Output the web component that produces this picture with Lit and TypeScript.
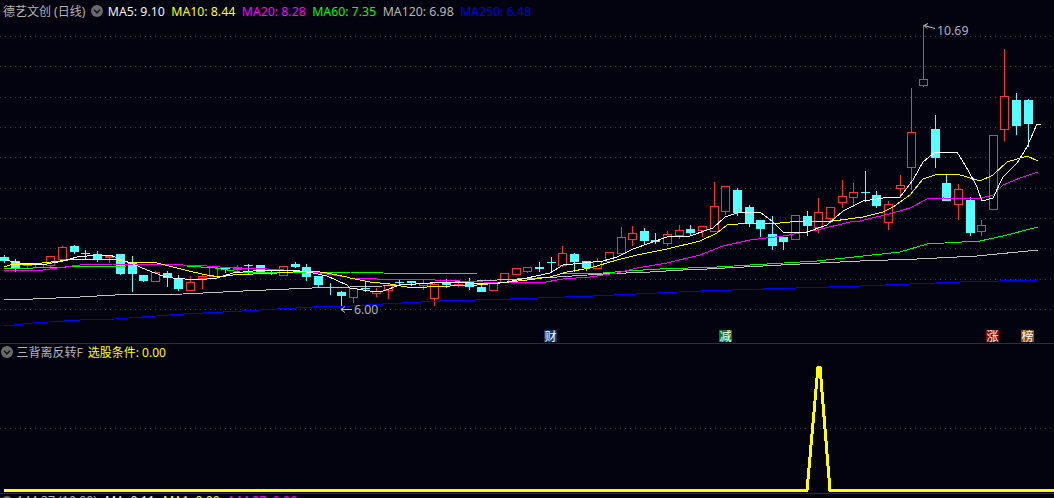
import { LitElement, html, css, svg } from "lit";
import { customElement } from "lit/decorators.js";

type C = [number, "r" | "c", number, number, number, number];
// index, kind, high, body top, body bottom, low
const CANDLES: C[] = [
  [0,"c",255,257,261,263],[1,"c",259,261,269,272],[2,"r",263,264,265,269],[3,"r",263,264,267,268],
  [4,"r",256,256,265,269],[5,"r",246,247,259,259],[6,"c",245,246,252,254],[7,"c",250,253,254,259],
  [8,"c",251,254,259,262],[9,"r",256,256,257,263],[10,"c",254,254,274,275],[11,"c",256,263,274,292],
  [12,"c",275,275,281,282],[13,"r",271,272,281,282],[14,"c",271,273,278,287],[15,"c",275,278,289,291],
  [16,"r",276,282,290,290],[17,"r",275,276,278,289],[18,"r",267,267,276,277],[19,"c",267,267,269,273],
  [20,"r",265,267,269,272],[21,"c",264,265,266,275],[22,"c",265,265,272,272],[23,"c",271,273,274,275],
  [24,"r",266,266,275,276],[25,"c",262,264,267,268],[26,"c",264,267,277,281],[27,"c",276,276,285,288],
  [28,"c",283,287,288,295],[29,"c",291,292,296,306],[30,"r",288,288,297,303],[31,"c",282,288,289,292],
  [32,"r",288,291,293,297],[33,"r",283,285,290,299],[34,"c",280,282,283,285],[35,"c",281,281,283,286],
  [36,"r",280,283,285,290],[37,"r",282,284,298,306],[38,"c",279,282,285,288],[39,"r",282,284,285,287],
  [40,"c",278,282,287,290],[41,"c",284,287,292,292],[42,"r",282,282,290,290],[43,"r",273,273,282,283],
  [44,"r",268,268,274,275],[45,"r",267,267,271,273],[46,"c",262,267,269,272],[47,"c",257,262,263,272],
  [48,"r",246,253,265,267],[49,"c",253,254,262,272],[50,"c",261,261,268,271],[51,"r",258,261,268,269],
  [52,"r",252,252,261,262],[53,"r",227,237,253,253],[54,"r",226,233,239,246],[55,"c",228,231,241,244],
  [56,"c",233,240,242,244],[57,"r",231,234,243,246],[58,"r",225,230,235,239],[59,"c",225,229,233,236],
  [60,"r",226,226,230,237],[61,"r",182,206,231,231],[62,"r",186,186,211,215],[63,"c",188,190,213,216],
  [64,"c",205,207,224,227],[65,"c",220,220,229,237],[66,"c",216,234,246,250],[67,"c",237,237,242,250],
  [68,"r",215,215,239,239],[69,"c",211,216,226,236],[70,"r",198,212,227,233],[71,"r",207,207,218,223],
  [72,"r",180,196,202,208],[73,"r",183,192,197,207],[74,"c",171,192,193,202],[75,"c",191,195,206,208],
  [76,"r",201,204,222,230],[77,"r",175,185,188,198],[78,"r",88,132,167,190],[79,"r",25,79,85,87],
  [80,"c",115,129,158,168],[81,"c",174,183,201,201],[82,"r",184,189,204,220],[83,"c",197,200,233,236],
  [84,"r",220,225,231,236],[85,"r",135,135,209,209],[86,"r",49,96,129,141],[87,"c",93,100,126,135],
  [88,"c",99,100,124,147],
];

const MA5 = "0,259 20,263 33,264 47,264 63,261 77,257 97,255 110,255 120,259 133,264 147,270 163,276 173,278 197,280 217,278 233,273 253,271 273,270 293,270 313,273 327,276 347,285 350,288 370,291 383,291 400,285 430,283 450,282 470,283 490,284 507,282 527,278 550,273 563,265 583,263 603,261 617,257 633,249 650,243 667,237 690,236 713,228 725,217 740,212 760,212 773,222 783,232 807,232 827,225 843,211 863,201 883,198 900,197 913,180 923,162 935,152 957,152 968,170 977,187 982,201 993,198 1003,177 1017,163 1027,147 1037,124 1041,124";
const MA10 = "4,267 10,265 33,264 60,261 77,259 113,259 127,262 157,263 177,268 193,272 207,275 220,277 233,275 253,274 277,273 293,272 313,271 327,273 347,277 350,278 360,280 370,282 390,284 407,287 427,287 450,286 477,285 500,283 527,280 550,277 567,272 590,268 617,260 637,255 667,249 700,241 717,233 727,225 750,223 780,223 800,221 833,221 863,217 883,212 893,207 910,195 923,179 935,175 957,174 980,181 993,175 1007,162 1027,156 1038,161";
const MA20 = "4,271 20,270 43,270 57,268 80,265 113,264 167,264 183,265 207,266 233,268 267,269 300,271 320,273 347,277 350,278 377,279 410,279 460,281 483,282 540,283 563,279 590,277 617,273 637,268 667,263 700,255 723,246 750,240 783,236 817,230 850,222 860,221 893,213 910,208 927,199 943,198 977,199 993,195 1003,185 1020,178 1038,172";
const MA60 = "4,269 33,268 67,267 127,266 187,266 215,268 240,272 350,272 383,273 477,274 563,274 603,273 627,271 660,269 717,267 767,264 817,261 900,252 927,244 980,241 1003,236 1038,227";
const MA120 = "4,300 33,299 80,297 115,295 183,294 243,291 312,288 350,287 383,286 433,283 477,281 557,277 603,274 650,272 683,270 707,269 800,264 860,261 917,259 977,256 1038,250";
const MA250 = "4,326 33,323 80,320 115,319 183,314 243,311 312,307 350,306 383,304 440,301 510,299 593,296 700,291 860,286 960,282 1038,280";

const GRID = [36, 66, 97, 127, 157, 188, 218, 248, 279, 309];

const chevron = html`<svg class="chev" viewBox="0 0 12 12" aria-hidden="true">
  <circle cx="6" cy="6" r="6" fill="#6a6a6a"></circle>
  <path d="M3 4.8 6 7.8 9 4.8" fill="none" stroke="#16161c" stroke-width="1.6"></path>
</svg>`;

@customElement("app-root")
export class AppRoot extends LitElement {
  static styles = css`
    :host {
      display: block;
      width: 100%;
      height: 498px;
      overflow: hidden;
      background: #03030f;
      font-family: "Noto Sans", "Noto Sans CJK SC", sans-serif;
      font-size: 12.3px;
      color: #b4b4b4;
    }
    .main, .sub {
      display: grid;
      width: 1054px;
    }
    .main { height: 343px; border-bottom: 1px solid #303034; }
    .sub { height: 149px; border-bottom: 1px solid #303034; }
    .layer { grid-area: 1 / 1; }
    svg.plot { display: block; width: 1054px; height: 100%; }
    .legend {
      display: flex;
      align-items: center;
      height: 22px;
      padding-left: 3px;
      white-space: nowrap;
      align-self: start;
    }
    .sub .legend { padding-left: 1px; height: 16px; font-size: 12px; }
    .chev { width: 12px; height: 12px; flex: none; }
    .name { margin-right: 6px; font-size: 12px; }
    .ma { margin-left: 6.5px; }
    .ma.first { margin-left: 4.5px; }
    .white { color: #f0f0f0; }
    .yellow { color: #ffff00; }
    .magenta { color: #ff00ff; }
    .green { color: #00ff00; }
    .grey { color: #b8b8b8; }
    .blue { color: #0000e8; }
    .cond { color: #ffff00; margin-left: 5px; }
    .title { margin-left: 3.5px; }
    .footer {
      display: flex;
      align-items: flex-start;
      height: 4px;
      overflow: hidden;
      padding: 2px 0 0 1px;
      width: 1054px;
      font-size: 12.3px;
      line-height: 10px;
      white-space: nowrap;
      box-sizing: border-box;
    }
    .footer .ma { margin-left: 8px; }
    text.val { font-family: "Noto Sans", sans-serif; font-size: 12.3px; fill: #aab4c0; }
    text.badge-t { font-family: "Noto Sans CJK SC", sans-serif; font-size: 12px; fill: #ffffff; text-anchor: middle; }
  `;

  private candle(c: C) {
    const [i, kind, hi, top, bot, lo] = c;
    const x = Math.floor(4.3 + i * 11.636);
    const col = kind === "r" ? "#ff3232" : "#54ffff";
    const wick = svg`<line x1=${x + 0.5} x2=${x + 0.5} y1=${hi} y2=${top} stroke=${col}></line>
      <line x1=${x + 0.5} x2=${x + 0.5} y1=${bot} y2=${lo} stroke=${col}></line>`;
    const body =
      kind === "r"
        ? svg`<rect x=${x - 3.5} y=${top + 0.5} width="8" height=${Math.max(bot - top, 1)} fill="#03030f" stroke=${col}></rect>`
        : svg`<rect x=${x - 4} y=${top} width="9" height=${Math.max(bot - top, 1)} fill=${col}></rect>`;
    return svg`${wick}${body}`;
  }

  private badge(x: number, fill: string, t: string) {
    return svg`<rect x=${x} y="330" width="13" height="12" fill=${fill}></rect>
      <text class="badge-t" x=${x + 6.5} y="340.5">${t}</text>`;
  }

  render() {
    return html`
      <div class="main">
        <svg class="plot layer" viewBox="0 0 1054 343">
          ${GRID.map(
            (y) => svg`<line x1="0" x2="1054" y1=${y + 0.5} y2=${y + 0.5} stroke="#3c3c3c" stroke-dasharray="1 4"></line>`
          )}
          <g shape-rendering="crispEdges">${CANDLES.map((c) => this.candle(c))}</g>
          <g fill="none" stroke-width="1" shape-rendering="crispEdges">
            <polyline points=${MA250} stroke="#0000ff"></polyline>
            <polyline points=${MA120} stroke="#c0c0c0"></polyline>
            <polyline points=${MA60} stroke="#00ff00"></polyline>
            <polyline points=${MA20} stroke="#ff00ff"></polyline>
            <polyline points=${MA10} stroke="#ffff00"></polyline>
            <polyline points=${MA5} stroke="#ffffff"></polyline>
          </g>
          <g fill="none" stroke="#c8c8c8">
            <path d="M924 25.5 935 28.5M924 25.5 928 23.5M924 25.5 927 28.5"></path>
            <path d="M341 309.5H352M341 309.5 345 306.5M341 309.5 345 312.5"></path>
          </g>
          <text class="val" x="937" y="35">10.69</text>
          <text class="val" x="354" y="314">6.00</text>
          ${this.badge(544, "#0a3a70", "财")}
          ${this.badge(719, "#0a7a14", "减")}
          ${this.badge(986, "#780a10", "涨")}
          ${this.badge(1021, "#8a4a10", "榜")}
        </svg>
        <div class="legend layer">
          <span class="name">德艺文创 (日线)</span>
          ${chevron}
          <span class="ma first white">MA5: 9.10</span>
          <span class="ma yellow">MA10: 8.44</span>
          <span class="ma magenta">MA20: 8.28</span>
          <span class="ma green">MA60: 7.35</span>
          <span class="ma grey">MA120: 6.98</span>
          <span class="ma blue">MA250: 6.48</span>
        </div>
      </div>
      <div class="sub">
        <svg class="plot layer" viewBox="0 344 1054 149">
          <line x1="0" x2="1054" y1="428.5" y2="428.5" stroke="#3c3c3c" stroke-dasharray="1 4"></line>
          <polyline
            points="4,490.5 807,490.5 818,367 820,367 830,490.5 1054,490.5"
            fill="none"
            stroke="#ffff00"
            stroke-width="3"
            shape-rendering="crispEdges"
          ></polyline>
        </svg>
        <div class="legend layer">
          ${chevron}
          <span class="title">三背离反转F</span>
          <span class="cond">选股条件: 0.00</span>
        </div>
      </div>
      <div class="footer">
        ${chevron}
        <span class="title">144.37 (19.00)</span>
        <span class="ma white">MA: 0.11</span>
        <span class="ma yellow">MA1: 0.00</span>
        <span class="ma magenta">144.37: 0.00</span>
      </div>
    `;
  }
}
